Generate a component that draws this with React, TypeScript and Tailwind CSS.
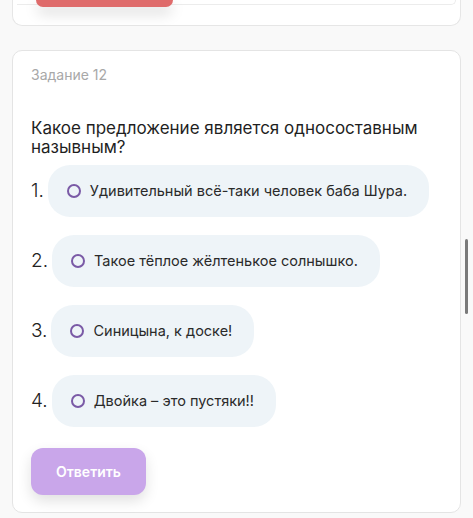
import React from "react";

const options = [
  "Удивительный всё-таки человек баба Шура.",
  "Такое тёплое жёлтенькое солнышко.",
  "Синицына, к доске!",
  "Двойка – это пустяки!!",
];

export default function App() {
  return (
    <div
      className="relative min-h-[518px] w-[473px] overflow-hidden bg-[#f9f9f9] px-[12px]"
      style={{ fontFamily: "Inter, 'Noto Sans', sans-serif" }}
    >
      {/* previous card bottom */}
      <div className="relative h-[26px] rounded-b-[10px] border border-t-0 border-[#e6e6e6] bg-white">
        <div className="absolute left-[4px] right-[4px] top-0 h-[5px] rounded-br-[10px] border-b border-r border-[#ececec]" />
        <div className="relative ml-[23px] h-[7px] w-[137px] rounded-b-[8px] bg-[#df6b6b] shadow-[0_6px_14px_rgba(0,0,0,0.18)]" />
      </div>

      {/* task card */}
      <div className="mt-[24px] rounded-[10px] border border-[#e4e4e4] bg-white px-[18px] pb-[17px] pt-[14px]">
        <div className="text-[14px] leading-[20px] text-[#a8a8a8]">Задание 12</div>
        <div className="mt-[34px] text-[17px] leading-[19px] text-[#1f1f1f]">
          Какое предложение является односоставным назывным?
        </div>
        <div className="mt-[8px] flex flex-col gap-[18px]">
          {options.map((o, i) => (
            <div key={i} className="flex items-center gap-[4px]">
              <div className="text-[19px] font-light text-[#222]">{i + 1}.</div>
              <div className="flex h-[52px] items-center rounded-[22px] bg-[#eef4f8] pl-[19px] pr-[22px]">
                <span className="h-[14px] w-[14px] shrink-0 rounded-full border-2 border-[#7a5aa6]" />
                <span className="ml-[9px] text-[14.5px] text-[#2a2a2a]">{o}</span>
              </div>
            </div>
          ))}
        </div>
        <button className="mt-[21px] h-[47px] w-[115px] rounded-[12px] bg-[#c9a6ea] text-[14px] font-semibold text-white shadow-[0_6px_14px_rgba(0,0,0,0.12)]">
          Ответить
        </button>
      </div>

      <div className="absolute right-[5px] top-[239px] h-[75px] w-[3px] rounded-full bg-[#7a7a7a]" />
    </div>
  );
}
